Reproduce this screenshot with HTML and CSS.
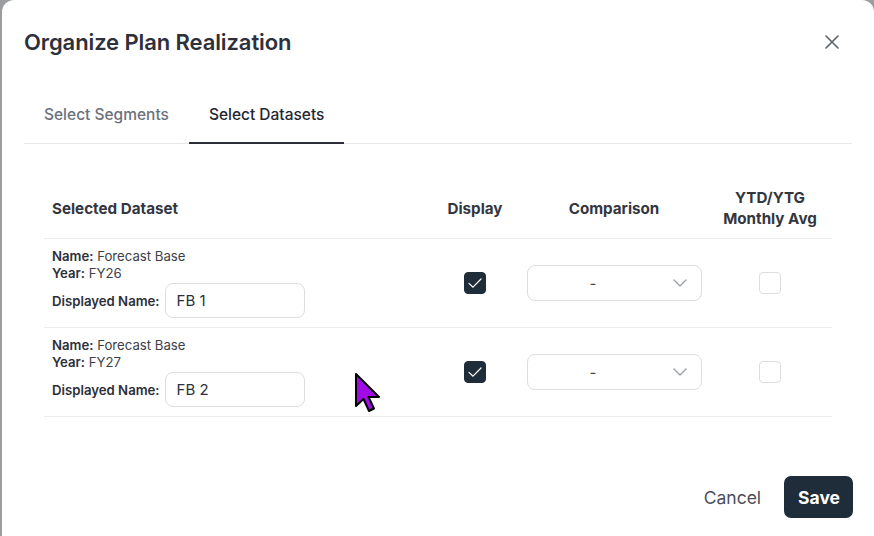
FILE: index.html
```html
<!DOCTYPE html>
<html lang="en">
<head>
    <meta charset="UTF-8">
    <meta name="viewport" content="width=device-width, initial-scale=1.0">
    <title>Organize Plan Realization</title>
    <link rel="stylesheet" href="styles.css">
</head>
<body>

<div class="modal">
    <!-- Header -->
    <div class="modal-header">
        <h2>Organize Plan Realization</h2>
        <button class="close-btn" aria-label="Close">
            <svg width="14" height="14" viewBox="0 0 14 14">
                <path d="M1 1 L13 13 M13 1 L1 13" stroke="#5b606b" stroke-width="1.6" stroke-linecap="round"/>
            </svg>
        </button>
    </div>

    <!-- Tabs -->
    <div class="tabs">
        <div class="tab">Select Segments</div>
        <div class="tab active">Select Datasets</div>
    </div>

    <!-- Dataset table -->
    <div class="table-wrap">
        <table class="dataset-table">
            <colgroup>
                <col class="col-name">
                <col class="col-display">
                <col class="col-compare">
                <col class="col-avg">
            </colgroup>
            <thead>
                <tr>
                    <th class="left">Selected Dataset</th>
                    <th>Display</th>
                    <th>Comparison</th>
                    <th>YTD/YTG<br>Monthly Avg</th>
                </tr>
            </thead>
            <tbody>
                <tr>
                    <td class="left">
                        <div class="meta"><b>Name:</b> Forecast Base</div>
                        <div class="meta"><b>Year:</b> FY26</div>
                        <div class="name-row">
                            <label>Displayed Name:</label>
                            <input class="text-input" type="text" value="FB 1">
                        </div>
                    </td>
                    <td><span class="check checked"><svg width="18" height="18" viewBox="0 0 18 18"><path d="M3 9.4 L7 13.2 L15 5" fill="none" stroke="#fff" stroke-width="1.2" stroke-linecap="round" stroke-linejoin="round"/></svg></span></td>
                    <td>
                        <div class="select">
                            <span class="select-value">-</span>
                            <svg class="chevron" width="14" height="8" viewBox="0 0 14 8"><path d="M1 1 L7 7 L13 1" fill="none" stroke="#9a9ea6" stroke-width="1.3" stroke-linecap="round" stroke-linejoin="round"/></svg>
                        </div>
                    </td>
                    <td><span class="check"></span></td>
                </tr>
                <tr>
                    <td class="left">
                        <div class="meta"><b>Name:</b> Forecast Base</div>
                        <div class="meta"><b>Year:</b> FY27</div>
                        <div class="name-row">
                            <label>Displayed Name:</label>
                            <input class="text-input" type="text" value="FB 2">
                        </div>
                    </td>
                    <td><span class="check checked"><svg width="18" height="18" viewBox="0 0 18 18"><path d="M3 9.4 L7 13.2 L15 5" fill="none" stroke="#fff" stroke-width="1.2" stroke-linecap="round" stroke-linejoin="round"/></svg></span></td>
                    <td>
                        <div class="select">
                            <span class="select-value">-</span>
                            <svg class="chevron" width="14" height="8" viewBox="0 0 14 8"><path d="M1 1 L7 7 L13 1" fill="none" stroke="#9a9ea6" stroke-width="1.3" stroke-linecap="round" stroke-linejoin="round"/></svg>
                        </div>
                    </td>
                    <td><span class="check"></span></td>
                </tr>
            </tbody>
        </table>
    </div>

    <!-- Footer -->
    <div class="modal-footer">
        <button class="cancel-btn">Cancel</button>
        <button class="save-btn">Save</button>
    </div>

    <!-- Mouse pointer from the capture -->
    <svg class="cursor" width="30" height="44" viewBox="0 0 30 44">
        <path d="M2 2 L2 34 L9.5 27 L15 39 L20 36.5 L14.5 25 L25 25 Z" fill="#a10be6" stroke="#000" stroke-width="2" stroke-linejoin="round"/>
    </svg>
</div>

</body>
</html>
```

FILE: styles.css
```css
body {
    margin: 0;
    padding: 0;
    background-color: #9c9da1;
    font-family: Inter, "Noto Sans", Arial, sans-serif;
    color: #2b2d38;
    height: 536px;
    overflow: hidden;
}

.modal {
    position: relative;
    margin-left: 2px;
    background-color: #fff;
    border-radius: 12px 12px 0 0;
    height: 560px;
    padding: 0 22px;
}

.modal-header {
    display: flex;
    justify-content: space-between;
    align-items: center;
    padding-top: 27px;
}

.modal-header h2 {
    margin: 0;
    font-size: 22px;
    line-height: 30px;
    font-weight: 600;
    color: #2e303b;
    letter-spacing: -0.1px;
}

.close-btn {
    background: none;
    border: none;
    padding: 5px;
    margin-right: 8px;
    display: flex;
    cursor: pointer;
}

.tabs {
    display: flex;
    margin-top: 28px;
    border-bottom: 1px solid #e8e9ec;
}

.tab {
    padding: 19px 20px 17px;
    font-size: 15.5px;
    line-height: 21px;
    font-weight: 500;
    color: #6b717c;
    margin-bottom: -1px;
    border-bottom: 2px solid transparent;
}

.tab.active {
    color: #24262f;
    border-bottom-color: #2b2d38;
}

.table-wrap {
    padding: 34px 20px 0;
}

.dataset-table {
    border-collapse: collapse;
    width: 788px;
    table-layout: fixed;
}

.col-name { width: 386px; }
.col-display { width: 90px; }
.col-compare { width: 188px; }
.col-avg { width: 124px; }

.dataset-table th {
    height: 60px;
    padding: 0 8px;
    font-size: 15.2px;
    line-height: 21px;
    font-weight: 700;
    color: #33363f;
    text-align: center;
    vertical-align: middle;
    border-bottom: 1px solid #ebecef;
}

.dataset-table th.left,
.dataset-table td.left {
    text-align: left;
}

.dataset-table td {
    padding: 9px 8px 9px;
    text-align: center;
    vertical-align: middle;
    border-bottom: 1px solid #ebecef;
}

.meta {
    font-size: 13.2px;
    line-height: 17px;
    color: #3d4049;
}

.meta b,
.name-row label {
    font-weight: 600;
    color: #2e3039;
}

.name-row {
    display: flex;
    align-items: center;
    gap: 5px;
    margin-top: 1px;
}

.name-row label {
    font-size: 13.2px;
}

.text-input {
    width: 140px;
    height: 35px;
    box-sizing: border-box;
    border: 1px solid #dcdde1;
    border-radius: 8px;
    padding: 0 11px;
    font-family: Inter, "Noto Sans", Arial, sans-serif;
    font-size: 15px;
    color: #2e3039;
    outline: none;
}

.check {
    display: inline-flex;
    align-items: center;
    justify-content: center;
    width: 22px;
    height: 22px;
    box-sizing: border-box;
    border: 1px solid #dcdde1;
    border-radius: 4px;
    vertical-align: middle;
}

.check.checked {
    background-color: #1f2d3a;
    border-color: #1f2d3a;
}

.select {
    position: relative;
    display: flex;
    align-items: center;
    height: 36px;
    box-sizing: border-box;
    margin-left: -1px;
    width: 175px;
    border: 1px solid #dcdde1;
    border-radius: 8px;
}

.select-value {
    width: 130px;
    text-align: center;
    font-size: 15px;
    color: #40434b;
}

.chevron {
    margin-left: 15px;
}

.modal-footer {
    display: flex;
    justify-content: flex-end;
    align-items: center;
    gap: 23px;
    margin-top: 59px;
    padding-right: 0;
}

.cancel-btn {
    background: none;
    border: none;
    padding: 0;
    font-family: Inter, "Noto Sans", Arial, sans-serif;
    font-size: 17.5px;
    color: #4a4e58;
    cursor: pointer;
}

.save-btn {
    height: 42px;
    padding: 0 13px 0 14px;
    margin-right: -1px;
    background-color: #1f2d3a;
    color: #fff;
    border: none;
    border-radius: 7px;
    font-family: Inter, "Noto Sans", Arial, sans-serif;
    font-size: 17.5px;
    font-weight: 700;
    cursor: pointer;
}

.save-btn:hover {
    background-color: #2a3a49;
}

.cursor {
    position: absolute;
    left: 352px;
    top: 372px;
}
```
